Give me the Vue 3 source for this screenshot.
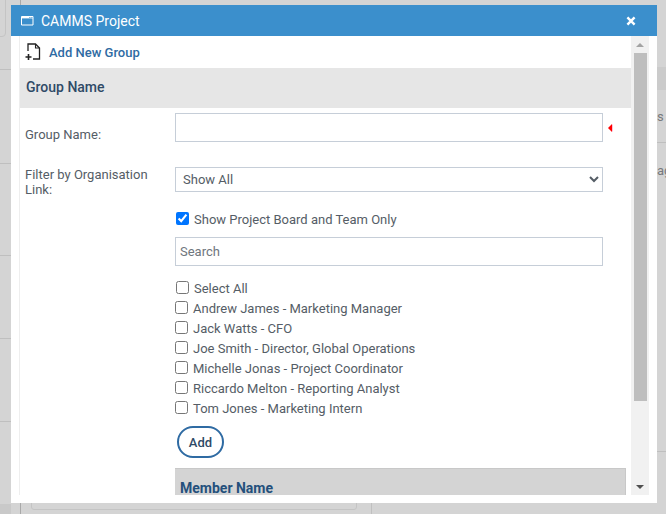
<script setup>
const people = [
  { name: 'Andrew James - Marketing Manager' },
  { name: 'Jack Watts - CFO' },
  { name: 'Joe Smith - Director, Global Operations' },
  { name: 'Michelle Jonas - Project Coordinator' },
  { name: 'Riccardo Melton - Reporting Analyst' },
  { name: 'Tom Jones - Marketing Intern' },
]
</script>

<template>
  <div class="page">
    <div class="bg-line h" style="top:69px"></div>
    <div class="bg-line h" style="top:163px"></div>
    <div class="bg-line h" style="top:255px"></div>
    <div class="bg-line h" style="top:338px"></div>
    <div class="bg-line h" style="top:421px"></div>
    <div class="bg-corner"></div>
    <div class="bg-right top"></div>
    <div class="bg-right mid"></div>
    <div class="bg-right low"></div>
    <div class="bg-band"></div>
    <span class="bg-text s">s</span>
    <span class="bg-text g">ag</span>
    <div class="bg-foot"></div>
    <div class="bg-v a"></div>
    <div class="bg-v b"></div>
    <div class="bg-v c"></div>

    <section class="modal">
      <header class="titlebar">
        <svg class="win" width="13" height="12" viewBox="0 0 13 12">
          <path d="M.5 1.5h11.5v8.5H.5z" fill="none" stroke="#fff" />
          <path d="M1 1h11v2.4H1z" fill="#fff" />
          <path d="M8.4 2h1v1h-1zM10.4 2h1v1h-1z" fill="#3b8fcc" />
        </svg>
        <span class="title">CAMMS Project</span>
        <svg class="close" width="10" height="10" viewBox="0 0 10 10">
          <path d="M1.4 1.4l7.2 7.2M8.6 1.4l-7.2 7.2" stroke="#fff" stroke-width="2.4" />
        </svg>
      </header>

      <div class="body">
        <div class="content">
          <div class="toolbar">
            <svg class="newdoc" width="16" height="18" viewBox="0 0 16 18">
              <path d="M3 8V1h7.5l4 4V16H8" fill="none" stroke="#222" stroke-width="1.3" />
              <path d="M10.5 1v4h4" fill="none" stroke="#222" stroke-width="1.1" />
              <path d="M.5 14h6M3.5 11v6" fill="none" stroke="#222" stroke-width="1.6" />
            </svg>
            <a class="addlink">Add New Group</a>
          </div>

          <h2 class="section">Group Name</h2>

          <div class="form">
            <div class="row first">
              <label class="lbl one">Group Name:</label>
              <div class="field">
                <input class="ctl tall" type="text" />
                <i class="req"></i>
              </div>
            </div>

            <div class="row second">
              <label class="lbl">Filter by Organisation Link:</label>
              <div class="stack">
                <select class="ctl sel">
                  <option>Show All</option>
                </select>
                <label class="check board">
                  <input type="checkbox" checked />
                  <span>Show Project Board and Team Only</span>
                </label>
                <input class="ctl tall search" type="text" placeholder="Search" />
                <label class="check all">
                  <input type="checkbox" />
                  <span>Select All</span>
                </label>
                <ul class="people">
                  <li v-for="p in people" :key="p.name">
                    <label class="check person">
                      <input type="checkbox" />
                      <span>{{ p.name }}</span>
                    </label>
                  </li>
                </ul>
                <button class="add" type="button">Add</button>
                <div class="member">Member Name</div>
              </div>
            </div>
          </div>
        </div>

        <div class="scrollbar">
          <span class="arrow up"></span>
          <span class="thumb"></span>
          <span class="arrow down"></span>
        </div>
      </div>
    </section>
  </div>
</template>

<style>
html, body { margin: 0; background: #d4d4d4; }
</style>

<style scoped>
.page {
  position: relative;
  width: 666px;
  height: 514px;
  overflow: hidden;
  box-sizing: border-box;
  padding: 5px 9px 11px 11px;
  background: #d4d4d4;
  font-family: Roboto, "Liberation Sans", sans-serif;
  font-size: 13px;
  color: #555d66;
}

/* dimmed page behind the dialog */
.bg-line { position: absolute; background: #bfbfbf; height: 1px; }
.bg-line.h { left: 0; width: 11px; }
.bg-corner {
  position: absolute; left: -8px; top: -6px; width: 12px; height: 41px;
  border: 1px solid #c4c4c4; border-radius: 4px;
}
.bg-right { position: absolute; left: 657px; width: 9px; }
.bg-right.top { top: 67px; height: 23px; background: #cbcbcb; }
.bg-right.mid { top: 142px; height: 1px; background: #bfbfbf; }
.bg-right.low { top: 451px; height: 1px; background: #bfbfbf; }
.bg-band { position: absolute; left: 0; top: 504px; width: 11px; height: 10px; background: #c9c9c9; }
.bg-text { position: absolute; left: 657px; color: #77797c; font-size: 13px; }
.bg-text.s { top: 109px; }
.bg-text.g { top: 163px; }
.bg-foot {
  position: absolute; left: 31px; top: 494px; width: 324px; height: 14px;
  border: 1px solid #c4c4c4; border-radius: 3px;
}
.bg-v { position: absolute; width: 1px; background: #a9a9a9; }
.bg-v.a { left: 20px; top: 0; height: 5px; }
.bg-v.b { left: 20px; top: 503px; height: 11px; }
.bg-v.c { left: 371px; top: 503px; height: 11px; background: #c0c0c0; }

/* dialog */
.modal {
  position: relative;
  width: 646px;
  height: 498px;
  display: flex;
  flex-direction: column;
  background: #fff;
}
.titlebar {
  height: 31px;
  flex: none;
  display: flex;
  align-items: center;
  padding: 0 21px 0 10px;
  background: #3b8fcc;
  color: #fff;
}
.title { margin-left: 7px; font-size: 14px; font-weight: 400; flex: 1; }
.body {
  flex: 1;
  min-height: 0;
  display: flex;
  padding: 0 8px 8px 8px;
}
.content {
  flex: none;
  width: 611px;
  height: 459px;
  overflow: hidden;
  border-left: 1px solid #eeeeee;
  background: #fff;
}
.toolbar {
  height: 32px;
  display: flex;
  align-items: center;
  padding-left: 5px;
}
.addlink { margin-left: 8px; color: #2f6ba3; font-weight: 500; font-size: 13px; }
.section {
  margin: 0;
  height: 40px;
  line-height: 39px;
  padding-left: 6px;
  background: #e6e6e6;
  color: #2f4a66;
  font-size: 14px;
  font-weight: 500;
}
.form { padding-left: 5px; }
.row { display: flex; }
.first { padding-top: 5px; }
.second { padding-top: 25px; }
.lbl { width: 150px; flex: none; line-height: 15px; box-sizing: border-box; padding-right: 10px; }
.lbl.one { padding-top: 14px; }
.field { display: flex; align-items: center; }
.req {
  margin-left: 5px;
  width: 0; height: 0;
  border-style: solid;
  border-width: 4px 4px 4px 0;
  border-color: transparent #f00 transparent transparent;
  box-shadow: 1px 0 0 -0.5px #ff7fb0;
}
.stack { display: flex; flex-direction: column; align-items: flex-start; }
.ctl {
  box-sizing: border-box;
  width: 428px;
  margin: 0;
  border: 1px solid #c6ced8;
  background: #fff;
  font-family: inherit;
  font-size: 13px;
  color: #555d66;
  outline: none;
}
.tall { height: 29px; padding: 0 4px; }
.sel { height: 25px; padding-left: 3px; border-radius: 0; }
.search::placeholder { color: #6f767d; opacity: 1; }
.check { display: flex; align-items: center; line-height: 20px; height: 20px; }
.check input { width: 13px; height: 13px; margin: 0 5px 3px 0; }
.board { margin: 18px 0 0 1px; }
.search { margin-top: 7px; }
.all { margin: 13px 0 0 1px; }
.people { list-style: none; margin: 0; padding: 0; }
.person input { margin-right: 5px; margin-left: 0; }
.add {
  margin: 7px 0 0 2px;
  width: 47px;
  height: 32px;
  box-sizing: border-box;
  border: 2px solid #2f6ba3;
  border-radius: 16px;
  background: #fff;
  color: #2f4a66;
  font-family: inherit;
  font-size: 13px;
  font-weight: 500;
  padding: 0;
}
.member {
  margin-top: 10px;
  width: 451px;
  height: 40px;
  box-sizing: border-box;
  padding: 10px 0 0 5px;
  line-height: 19px;
  background: #d4d4d4;
  border-top: 1px solid #c8c8c8;
  border-right: 1px solid #c8c8c8;
  color: #24507c;
  font-size: 14px;
  font-weight: 700;
}

/* scrollbar */
.scrollbar {
  position: relative;
  flex: none;
  width: 18px;
  height: 459px;
  background: #f1f1f1;
  display: flex;
  flex-direction: column;
  align-items: center;
}
.thumb { width: 13px; height: 348px; background: #bebebe; }
.arrow { width: 0; height: 0; border-style: solid; flex: none; }
.arrow.up {
  margin: 7px 0 6px;
  border-width: 0 4px 4px 4px;
  border-color: transparent transparent #a3a3a3 transparent;
}
.arrow.down {
  margin-top: auto;
  margin-bottom: 6px;
  border-width: 4px 4px 0 4px;
  border-color: #505050 transparent transparent transparent;
}
</style>
